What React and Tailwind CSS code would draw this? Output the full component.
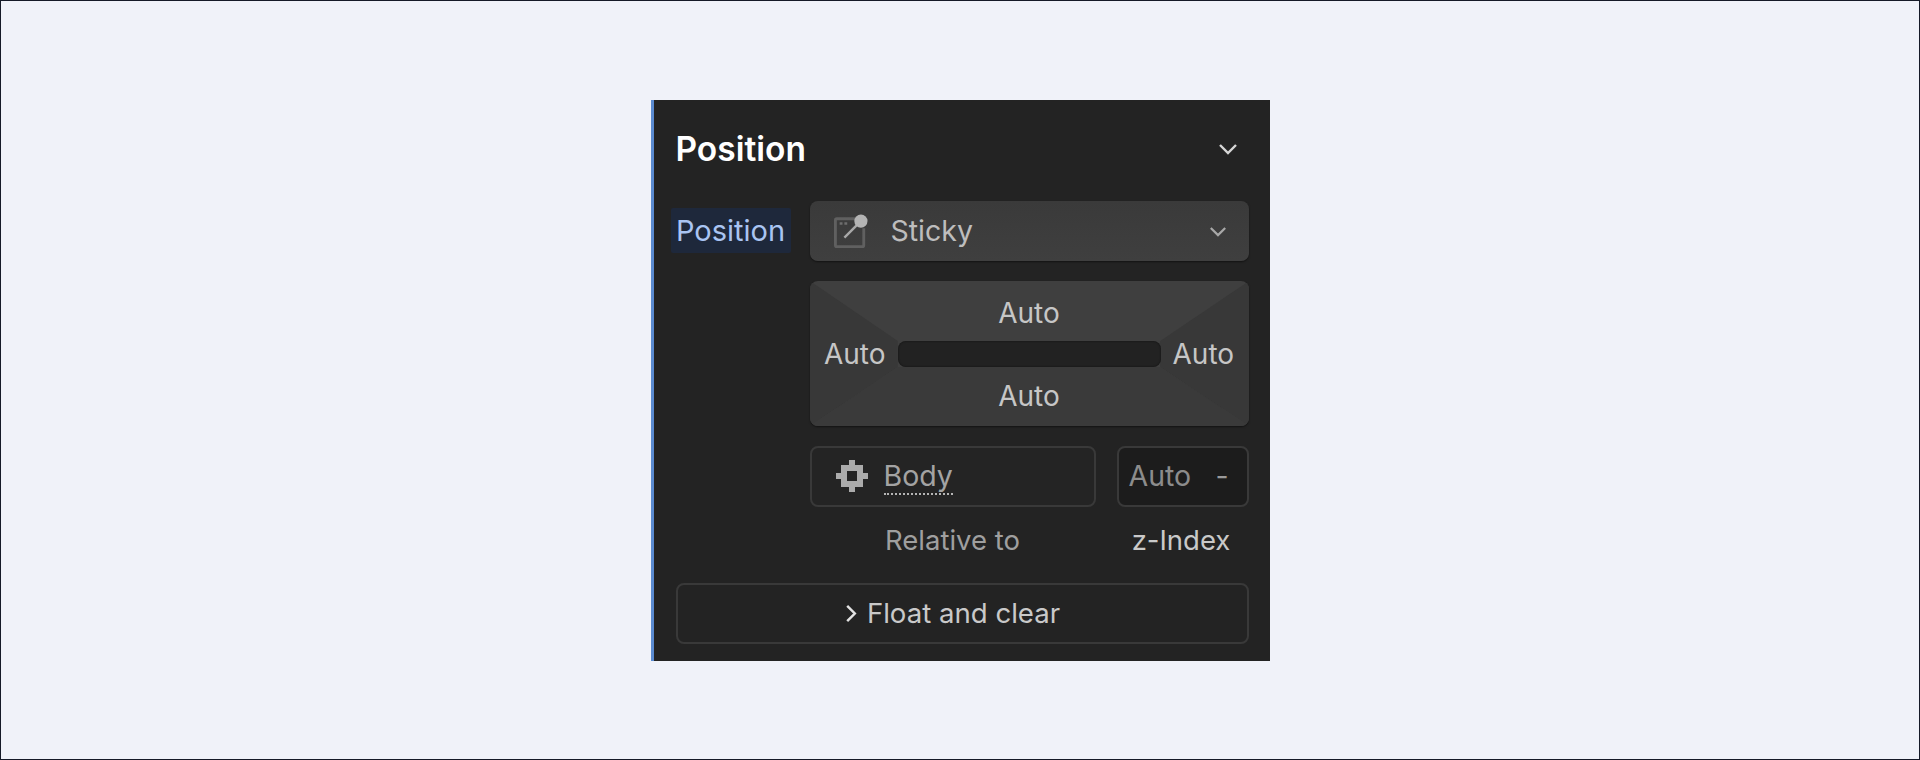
const font = { fontFamily: 'Inter, "Liberation Sans", sans-serif' };

function Chevron({ className }) {
  return (
    <svg viewBox="0 0 20 12" fill="none" stroke="currentColor" strokeWidth="2.4" className={className}>
      <path d="M2 2l8 8 8-8" />
    </svg>
  );
}

function StickyIcon() {
  return (
    <svg viewBox="0 0 36 36" className="h-[34px] w-[34px] shrink-0" fill="none">
      <path d="M25 5H3a1.5 1.5 0 0 0-1.5 1.5V33a1.5 1.5 0 0 0 1.5 1.5h27a1.5 1.5 0 0 0 1.5-1.5V15" stroke="#606060" strokeWidth="3" />
      <path d="M6 10h3M11 10h3" stroke="#6e6e6e" strokeWidth="2.5" />
      <path d="M11 25L25 11" stroke="#a8a8a8" strokeWidth="2.5" />
      <circle cx="28.5" cy="7.5" r="7" fill="#b4b4b4" />
    </svg>
  );
}

function BodyIcon() {
  return (
    <svg viewBox="0 0 32 32" className="h-8 w-8 shrink-0" shapeRendering="crispEdges">
      <path
        fillRule="evenodd"
        fill="#ababab"
        d="M13 0h6v5h8v8h5v6h-5v8h-8v5h-6v-5H5v-8H0v-6h5V5h8zM11 11v10h10V11z"
      />
    </svg>
  );
}

export default function App() {
  return (
    <div
      className="flex h-[760px] w-full items-center justify-center border border-[#151a28] bg-[#f0f2f9]"
      style={font}
    >
      <div className="flex h-[561px] w-[619px] flex-col border-l-[3px] border-[#5a8ad0] bg-[#232323] pl-[22px] pr-[21px]">
        <div className="flex h-[101px] items-center justify-between pb-[2px] pr-[11px]">
          <span className="text-[33.5px] font-semibold text-white">Position</span>
          <Chevron className="h-[12px] w-[20px] text-[#d6d6d6]" />
        </div>

        <div className="grid grid-cols-[134px_1fr] gap-y-[20px]">
          <div className="-ml-[5px] flex h-[45px] w-[120px] items-center justify-center self-center rounded-[2px] bg-[#1e283b] text-[29px] text-[#a9c4f2]">
            Position
          </div>
          <div className="flex h-[60px] items-center rounded-[8px] bg-gradient-to-b from-[#3a3a3a] to-[#3f3f3f] pl-[24px] pr-[22px] shadow-[0_1px_2px_rgba(0,0,0,0.5)]">
            <StickyIcon />
            <span className="ml-[23px] flex-1 pt-[1px] text-[28.5px] text-[#bdbdbd]">Sticky</span>
            <Chevron className="mt-[2px] h-[11px] w-[18px] text-[#a8a8a8]" />
          </div>

          <div className="col-start-2 relative h-[145px] overflow-hidden rounded-[8px] bg-[#3f3f3f] shadow-[0_1px_2px_rgba(0,0,0,0.5)]">
            <svg viewBox="0 0 440 145" preserveAspectRatio="none" className="absolute inset-0 h-full w-full">
              <polygon points="0,0 88,60 88,86 0,145" fill="#383838" />
              <polygon points="440,0 351,60 351,86 440,145" fill="#383838" />
              <polygon points="0,145 88,86 351,86 440,145" fill="#3a3a3a" />
            </svg>
            <div className="relative grid h-full grid-cols-[88px_1fr_88px] grid-rows-[60px_26px_59px] text-[28px] text-[#c6c6c6]">
              <span className="col-span-3 flex items-center justify-center pt-[4px] leading-none">Auto</span>
              <span className="flex items-center justify-end pr-[12px] leading-none">Auto</span>
              <div className="rounded-[8px] bg-[#222222] shadow-[inset_0_0_2px_rgba(0,0,0,0.6)]" />
              <span className="flex items-center pl-[12px] leading-none">Auto</span>
              <span className="col-span-3 flex items-center justify-center leading-none">Auto</span>
            </div>
          </div>

          <div className="col-start-2 grid grid-cols-[286px_132px] justify-between gap-y-[18px]">
            <div className="flex h-[61px] items-center rounded-[8px] border-2 border-[#393939] bg-[#242424] pl-[24px]">
              <BodyIcon />
              <span className="ml-[16px] mt-[1px] border-b-2 border-dotted border-[#b5b5b5] text-[28.5px] leading-[34px] text-[#a3a3a3]">
                Body
              </span>
            </div>
            <div className="flex h-[61px] items-center justify-between rounded-[8px] border-2 border-[#393939] bg-[#1c1c1c] pl-[10px] pr-[18px] pt-[1px] text-[28.5px] text-[#8c8c8c]">
              <span>Auto</span>
              <span className="text-[#9a9a9a]">-</span>
            </div>
            <span className="text-center text-[27.5px] leading-[30px] text-[#9f9f9f]">Relative to</span>
            <span className="pr-[3px] text-center text-[27.5px] leading-[30px] text-[#c9c9c9]">z-Index</span>
          </div>
        </div>

        <div className="mt-[28px] flex h-[61px] items-center justify-center gap-[10px] rounded-[8px] border-2 border-[#393939] pr-[19px] pt-[1px] text-[27.6px] text-[#c9c9c9]">
          <svg viewBox="0 0 12 20" fill="none" stroke="#e2e2e2" strokeWidth="2.6" className="h-[19px] w-[12px]">
            <path d="M2 2l8 8-8 8" />
          </svg>
          <span>Float and clear</span>
        </div>
      </div>
    </div>
  );
}
